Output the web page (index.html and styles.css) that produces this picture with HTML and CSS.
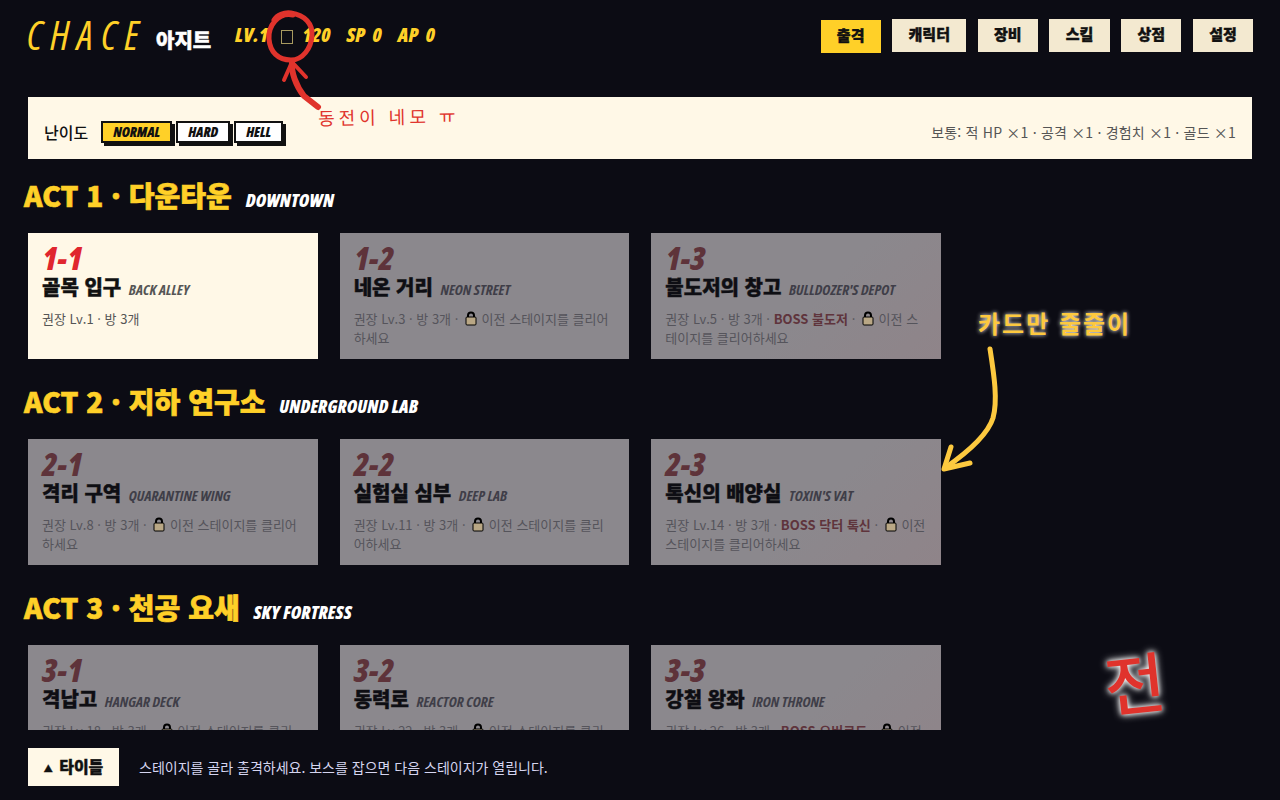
FILE: index.html
```html
<!DOCTYPE html>
<html lang="ko">
<head>
    <meta charset="UTF-8">
    <title>CHACE 아지트</title>
    <link rel="stylesheet" href="styles.css">
</head>
<body>
<div class="app">
    <header class="top">
        <div class="brand">
            <span class="logo">CHACE</span>
            <span class="base">아지트</span>
            <div class="stats">
                <span>LV.1</span>
                <span class="coin"><i class="tofu"></i>120</span>
                <span class="pt">SP 0</span>
                <span class="pt">AP 0</span>
            </div>
        </div>
        <nav class="menu">
            <a class="on">출격</a>
            <a>캐릭터</a>
            <a>장비</a>
            <a>스킬</a>
            <a>상점</a>
            <a>설정</a>
        </nav>
    </header>

    <section class="diff">
        <div class="diff-left">
            <b>난이도</b>
            <span class="chip active">NORMAL</span>
            <span class="chip">HARD</span>
            <span class="chip">HELL</span>
        </div>
        <p>보통: 적 HP ×1 · 공격 ×1 · 경험치 ×1 · 골드 ×1</p>
    </section>

    <main class="stages">
        <h2 class="act">ACT 1 · 다운타운 <small>DOWNTOWN</small></h2>
        <div class="cards">
            <article class="card">
                <div class="num">1-1</div>
                <h3>골목 입구 <small>BACK ALLEY</small></h3>
                <p>권장 Lv.1 · 방 3개</p>
            </article>
            <article class="card locked">
                <div class="num">1-2</div>
                <h3>네온 거리 <small>NEON STREET</small></h3>
                <p>권장 Lv.3 · 방 3개 · <svg class="lock" viewBox="0 0 12 15"><path d="M3 7V4.500a3 3 0 0 1 6 0V7" fill="none" stroke="#000" stroke-width="2"/><rect x="1" y="6" width="10" height="8" rx="1" fill="#b9a785" stroke="#000"/></svg> 이전 스테이지를 클리어하세요</p>
            </article>
            <article class="card locked boss">
                <div class="num">1-3</div>
                <h3>불도저의 창고 <small>BULLDOZER'S DEPOT</small></h3>
                <p>권장 Lv.5 · 방 3개 · <b>BOSS 불도저</b> · <svg class="lock" viewBox="0 0 12 15"><path d="M3 7V4.500a3 3 0 0 1 6 0V7" fill="none" stroke="#000" stroke-width="2"/><rect x="1" y="6" width="10" height="8" rx="1" fill="#b9a785" stroke="#000"/></svg> 이전 스테이지를 클리어하세요</p>
            </article>
        </div>

        <h2 class="act">ACT 2 · 지하 연구소 <small>UNDERGROUND LAB</small></h2>
        <div class="cards">
            <article class="card locked">
                <div class="num">2-1</div>
                <h3>격리 구역 <small>QUARANTINE WING</small></h3>
                <p>권장 Lv.8 · 방 3개 · <svg class="lock" viewBox="0 0 12 15"><path d="M3 7V4.500a3 3 0 0 1 6 0V7" fill="none" stroke="#000" stroke-width="2"/><rect x="1" y="6" width="10" height="8" rx="1" fill="#b9a785" stroke="#000"/></svg> 이전 스테이지를 클리어하세요</p>
            </article>
            <article class="card locked">
                <div class="num">2-2</div>
                <h3>실험실 심부 <small>DEEP LAB</small></h3>
                <p>권장 Lv.11 · 방 3개 · <svg class="lock" viewBox="0 0 12 15"><path d="M3 7V4.500a3 3 0 0 1 6 0V7" fill="none" stroke="#000" stroke-width="2"/><rect x="1" y="6" width="10" height="8" rx="1" fill="#b9a785" stroke="#000"/></svg> 이전 스테이지를 클리어하세요</p>
            </article>
            <article class="card locked boss">
                <div class="num">2-3</div>
                <h3>톡신의 배양실 <small>TOXIN'S VAT</small></h3>
                <p>권장 Lv.14 · 방 3개 · <b>BOSS 닥터 톡신</b> · <svg class="lock" viewBox="0 0 12 15"><path d="M3 7V4.500a3 3 0 0 1 6 0V7" fill="none" stroke="#000" stroke-width="2"/><rect x="1" y="6" width="10" height="8" rx="1" fill="#b9a785" stroke="#000"/></svg> 이전 스테이지를 클리어하세요</p>
            </article>
        </div>

        <h2 class="act">ACT 3 · 천공 요새 <small>SKY FORTRESS</small></h2>
        <div class="cards">
            <article class="card locked">
                <div class="num">3-1</div>
                <h3>격납고 <small>HANGAR DECK</small></h3>
                <p>권장 Lv.18 · 방 3개 · <svg class="lock" viewBox="0 0 12 15"><path d="M3 7V4.500a3 3 0 0 1 6 0V7" fill="none" stroke="#000" stroke-width="2"/><rect x="1" y="6" width="10" height="8" rx="1" fill="#b9a785" stroke="#000"/></svg> 이전 스테이지를 클리어하세요</p>
            </article>
            <article class="card locked">
                <div class="num">3-2</div>
                <h3>동력로 <small>REACTOR CORE</small></h3>
                <p>권장 Lv.22 · 방 3개 · <svg class="lock" viewBox="0 0 12 15"><path d="M3 7V4.500a3 3 0 0 1 6 0V7" fill="none" stroke="#000" stroke-width="2"/><rect x="1" y="6" width="10" height="8" rx="1" fill="#b9a785" stroke="#000"/></svg> 이전 스테이지를 클리어하세요</p>
            </article>
            <article class="card locked boss">
                <div class="num">3-3</div>
                <h3>강철 왕좌 <small>IRON THRONE</small></h3>
                <p>권장 Lv.26 · 방 3개 · <b>BOSS 오버로드</b> · <svg class="lock" viewBox="0 0 12 15"><path d="M3 7V4.500a3 3 0 0 1 6 0V7" fill="none" stroke="#000" stroke-width="2"/><rect x="1" y="6" width="10" height="8" rx="1" fill="#b9a785" stroke="#000"/></svg> 이전 스테이지를 클리어하세요</p>
            </article>
        </div>
    </main>

    <footer class="bottom">
        <a class="back"><span class="up">▲</span> 타이틀</a>
        <p>스테이지를 골라 출격하세요. 보스를 잡으면 다음 스테이지가 열립니다.</p>
    </footer>
</div>

<!-- hand drawn notes on top of the screenshot -->
<svg class="marks" viewBox="0 0 1280 800">
    <g fill="none" stroke="#e0332c" stroke-width="5" stroke-linecap="round" stroke-linejoin="round">
        <path d="M293 15C278 12 268 26 269 39C270 52 278 60 291 60C303 60 311 48 312 36C313 24 305 15 291 13C284 12 277 15 274 20"/>
        <path d="M292 62C291 72 296 86 304 96L318 107" stroke-width="6"/>
        <path d="M284 80L292 62L306 77" stroke-width="4"/>
    </g>
    <g fill="none" stroke="#fdc93f" stroke-width="5" stroke-linecap="round" stroke-linejoin="round">
        <path d="M990 349C994 375 998 400 993 418C988 434 968 452 945 468"/>
        <path d="M951 447L944 469L970 463"/>
    </g>
</svg>
<span class="note note-red">동전이 네모 ㅠ</span>
<span class="note note-gold">카드만 줄줄이</span>
<span class="note note-big">전</span>
</body>
</html>
```

FILE: styles.css
```css
* {
    box-sizing: border-box;
}

body {
    margin: 0;
    background: #0c0c14;
    font-family: "Noto Sans CJK KR", "Noto Sans", sans-serif;
    color: #111;
    overflow: hidden;
}

.app {
    height: 800px;
    display: flex;
    flex-direction: column;
}

/* top bar */
.top {
    height: 97px;
    flex: none;
    padding: 19px 27px 0 27px;
    display: flex;
    justify-content: space-between;
    align-items: flex-start;
}

.brand {
    display: flex;
    align-items: center;
    height: 32px;
}

.logo {
    font-family: "Open Sans", sans-serif;
    font-stretch: 75%;
    font-style: italic;
    font-weight: 500;
    font-size: 40px;
    letter-spacing: 8px;
    color: #ffd028;
    line-height: 32px;
    width: 129px;
}

.base {
    font-weight: 900;
    font-size: 20px;
    -webkit-text-stroke: 0.5px #fff;
    color: #fff;
    width: 79px;
    margin-top: 9px;
}

.stats {
    display: flex;
    gap: 16px;
    font-family: "Open Sans", sans-serif;
    font-stretch: 75%;
    font-style: italic;
    font-weight: 800;
    font-size: 20px;
    color: #ffd028;
    margin-top: -2px;
}

.coin {
    display: flex;
    align-items: center;
    gap: 9px;
    margin-left: -3px;
}

.pt {
    word-spacing: 4px;
}

.tofu {
    width: 12px;
    height: 14px;
    margin-top: 6px;
    border: 1px solid #a89a60;
}

.menu {
    display: flex;
    gap: 11.6px;
}

.menu a {
    display: block;
    height: 33px;
    padding: 0 16.25px;
    background: #f3e9d0;
    font-weight: 900;
    font-size: 15px;
    -webkit-text-stroke: 0.4px #111;
    line-height: 30px;
}

.menu a.on {
    background: #ffd028;
    margin-top: 1px;
}

/* difficulty */
.diff {
    margin: 0 28px;
    height: 62px;
    flex: none;
    background: #fff8e7;
    padding: 7px 16px 0 16px;
    display: flex;
    align-items: center;
    justify-content: space-between;
}

.diff-left {
    display: flex;
    align-items: center;
    gap: 3px;
}

.diff-left b {
    font-size: 16px;
    font-weight: 500;
    margin-right: 10px;
}

.chip {
    height: 22px;
    padding: 0 10px;
    border: 2px solid #111;
    background: #fff;
    box-shadow: 3px 3px 0 #111;
    font-family: "Open Sans", sans-serif;
    font-stretch: 75%;
    font-style: italic;
    font-weight: 800;
    font-size: 14px;
    line-height: 17px;
    margin-right: 1px;
}

.chip.active {
    background: #ffd028;
}

.diff p {
    margin: 0;
    font-size: 14px;
    letter-spacing: 0.2px;
    color: #555;
}

/* stage list */
.stages {
    flex: 1;
    overflow: hidden;
    padding: 0 339px 0 28px;
}

.act {
    margin: 19px 0 21px -4px;
    height: 34px;
    font-weight: 900;
    font-size: 28px;
    -webkit-text-stroke: 0.7px #ffd028;
    line-height: 34px;
    color: #ffd028;
}

.act small {
    margin-left: 6px;
    font-family: "Open Sans", sans-serif;
    font-stretch: 75%;
    font-style: italic;
    font-weight: 800;
    font-size: 18px;
    line-height: 1;
    letter-spacing: 0.2px;
    -webkit-text-stroke: 0;
    color: #fff;
}

.cards {
    display: grid;
    grid-template-columns: repeat(3, 1fr);
    gap: 22px;
    margin-bottom: 25px;
}

.card {
    height: 126px;
    padding: 10px 14px;
    background: #fff8e7;
    overflow: hidden;
}

.num {
    font-family: "Open Sans", sans-serif;
    font-stretch: 75%;
    font-style: italic;
    font-weight: 800;
    font-size: 32px;
    line-height: 30px;
    color: #e0262e;
}

.card h3 {
    margin: 0;
    font-weight: 900;
    font-size: 20px;
    -webkit-text-stroke: 0.4px #111;
    line-height: 27px;
    color: #111;
}

.card h3 small {
    margin-left: 2px;
    font-family: "Open Sans", sans-serif;
    font-stretch: 75%;
    font-style: italic;
    font-weight: 700;
    font-size: 15px;
    line-height: 1;
    -webkit-text-stroke: 0;
    color: #555;
}

.card p {
    margin: 9px 0 0 0;
    font-size: 13px;
    line-height: 19px;
    color: #555;
}

.card p b {
    color: #b02a32;
    font-weight: 700;
}

/* locked cards are dimmed, colours taken from the dimmed look */
.card.locked {
    background: #8b888d;
}

.card.boss {
    background: linear-gradient(135deg, #8b888d 55%, #8f8489);
}

.card.locked .num {
    color: #5e333a;
}

.card.locked h3 {
    color: #0e0e14;
}

.card.locked h3 small {
    color: #3f3e48;
}

.card.locked p {
    color: #55545b;
}

.card.locked p b {
    color: #5f343c;
}

.lock {
    width: 12px;
    height: 15px;
    margin: 0 1px 0 3px;
    vertical-align: -2px;
}

/* footer */
.bottom {
    height: 70px;
    flex: none;
    padding: 18px 28px 0 28px;
    display: flex;
    align-items: flex-start;
    gap: 20px;
}

.back {
    display: block;
    width: 91px;
    height: 38px;
    background: #fff8e7;
    text-align: center;
    font-weight: 900;
    font-size: 16px;
    -webkit-text-stroke: 0.4px #111;
    line-height: 36px;
}

.up {
    font-size: 9px;
    margin-right: 2px;
    vertical-align: 1px;
}

.bottom p {
    margin: 0;
    font-size: 14px;
    line-height: 38px;
    color: #d5d5f0;
}

/* annotations */
.marks {
    position: absolute;
    left: 0;
    top: 0;
    width: 1280px;
    height: 800px;
    pointer-events: none;
}

.note {
    position: absolute;
    font-weight: 400;
    white-space: nowrap;
}

.note-red {
    left: 318px;
    top: 103px;
    font-size: 18px;
    letter-spacing: 4px;
    color: #e0332c;
    transform: rotate(-1deg);
}

.note-gold {
    left: 978px;
    top: 305px;
    font-size: 24px;
    font-weight: 700;
    letter-spacing: 2px;
    color: #fdc93f;
    text-shadow: 0 0 4px #fff;
}

.note-big {
    left: 1104px;
    top: 640px;
    font-size: 66px;
    line-height: 80px;
    font-weight: 500;
    color: #e0332c;
    transform: rotate(-6deg);
    text-shadow: 0 0 5px #fff, 0 0 8px #fff;
}
```
